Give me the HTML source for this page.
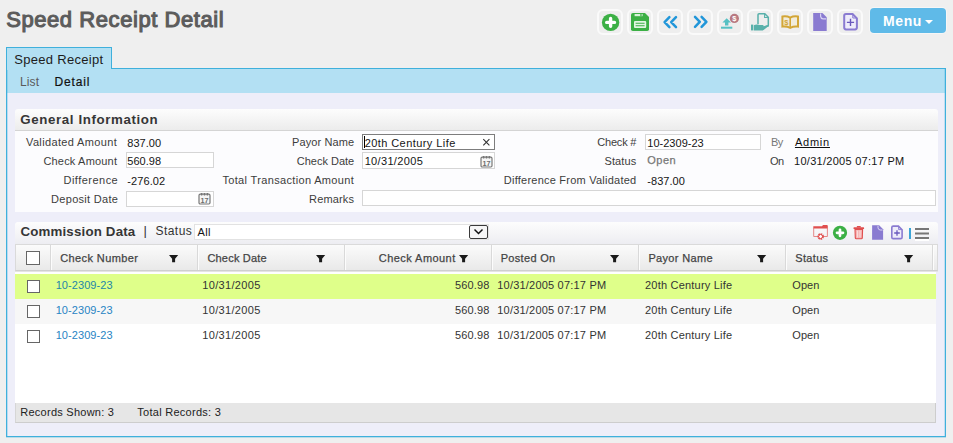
<!DOCTYPE html>
<html><head><meta charset="utf-8">
<style>
*{box-sizing:border-box;margin:0;padding:0}
html,body{width:953px;height:443px;overflow:hidden}
body{background:#efefef;font-family:"Liberation Sans",sans-serif;font-size:11px;color:#222;position:relative}
.abs{position:absolute}
.t{position:absolute;white-space:nowrap;line-height:1}
.tb{position:absolute;top:9px;width:26px;height:26px;border:2px solid #fafafa;border-radius:6px;background:#eeeeee}
.tb svg{position:absolute;left:-2px;top:-2px}
#menu{left:870px;top:8px;width:76px;height:25px;background:#5fbae8;border-radius:4px;box-shadow:0 0 0 1px rgba(255,255,255,.45)}
#menu i{position:absolute;left:55px;top:12px;border-left:4px solid transparent;border-right:4px solid transparent;border-top:4px solid #fff}
#tab{left:6px;top:47px;width:106px;height:22px;background:#b3e0f3;border:1px solid #3fb0dc;border-bottom:none}
#bar{left:6px;top:68px;width:940px;height:26px;background:#b3e0f3;border-top:1px solid #3fb0dc;border-left:1px solid #3fb0dc;border-right:1px solid #3fb0dc;box-shadow:inset 1px 0 0 rgba(63,176,220,.3),inset -1px 0 0 rgba(63,176,220,.25)}
#panel{left:6px;top:93px;width:940px;height:344px;background:#eeeef9;border:1px solid #3fb0dc;border-top:none;box-shadow:inset 1px 0 0 rgba(63,176,220,.3),inset -1px 0 0 rgba(63,176,220,.25),0 1px 0 rgba(63,176,220,.3)}
#tabcover{left:7px;top:68px;width:104px;height:2px;background:#b3e0f3}
.sechd{position:absolute;left:15px;width:923px;border-radius:3px 3px 0 0;background:linear-gradient(#fdfdfd,#ececec)}
#gibody{left:15px;top:131px;width:923px;height:81px;background:#fcfcfe}
.inp{position:absolute;background:#fff;border:1px solid #d6d6d6}
#ghd{left:15px;top:244px;width:923px;height:27px;background:linear-gradient(#fbfbfb,#e9e9e9);border:1px solid #dadada;border-bottom-color:#cfcfcf;box-shadow:0 1px 0 #e4e4e4}
.cs{position:absolute;top:245px;width:1px;height:25px;background:#d9d9d9;box-shadow:1px 0 0 #fcfcfc}
.row{position:absolute;left:15px;width:921px;height:25px}
.cb{position:absolute;width:14px;height:14px;background:#fff;border:1px solid #666;border-radius:0}
#gbody{left:15px;top:271px;width:921px;height:132px;background:#fff}
#gfoot{left:15px;top:403px;width:921px;height:20px;background:#e6e6e6;border-bottom:1px solid #cdcdcd;border-right:1px solid #cdcdcd;border-left:1px solid #d6d6d6}
.ft{position:absolute;top:255px;width:10px;height:8px}
.ic{position:absolute}
</style></head><body>
<div class="tb" style="left:597px"><svg width="26" height="26" viewBox="0 0 26 26"><circle cx="13.6" cy="13.4" r="8.7" fill="#3cb045"/><path d="M9.7 13.4H17.5M13.6 9.5V17.3" stroke="#fff" stroke-width="3.4" stroke-linecap="round"/></svg></div>
<div class="tb" style="left:627px"><svg width="26" height="26" viewBox="0 0 26 26"><path d="M6 4H18L22 8V20.3Q22 22.1 20.2 22.1H5.8Q4 22.1 4 20.3V5.8Q4 4 6 4Z" fill="#3cb045"/><rect x="7.6" y="5" width="8" height="2.2" fill="#d9f2db"/><rect x="13.3" y="5" width="1.3" height="2.2" fill="#3cb045"/><rect x="7" y="11.9" width="12.2" height="7.2" rx="1" fill="#e3f6e4"/><path d="M8.6 14.3H17.6M8.6 16.8H17.6" stroke="#3cb045" stroke-width="1.1"/></svg></div>
<div class="tb" style="left:657px"><svg width="26" height="26" viewBox="0 0 26 26"><path d="M12.4 8.1L7.6 13.1L12.4 18.1M19 8.1L14.2 13.1L19 18.1" fill="none" stroke="#2196d9" stroke-width="2.5" stroke-linejoin="round" stroke-linecap="round"/></svg></div>
<div class="tb" style="left:687px"><svg width="26" height="26" viewBox="0 0 26 26"><path d="M8 7.8L12.8 12.8L8 17.8M14.6 7.8L19.4 12.8L14.6 17.8" fill="none" stroke="#2196d9" stroke-width="2.5" stroke-linejoin="round" stroke-linecap="round"/></svg></div>
<div class="tb" style="left:717px"><svg width="26" height="26" viewBox="0 0 26 26"><path d="M9.7 9.2L14 13.4H11.4V16.4H8V13.4H5.4Z" fill="#55c0c3"/><rect x="4" y="17.7" width="11.3" height="2" fill="#55c0c3"/><circle cx="17.4" cy="9.4" r="4.6" fill="#b87880"/><text x="17.4" y="12.2" font-family="Liberation Sans" font-weight="bold" font-size="7.5" fill="#fff" text-anchor="middle">$</text></svg></div>
<div class="tb" style="left:747px"><svg width="26" height="26" viewBox="0 0 26 26"><path d="M11 15.2V5.8Q11 4.7 12.1 4.7H17.8L21.3 8.2V16.2Q21.3 17.3 20.2 17.3H18.8" fill="none" stroke="#58b0aa" stroke-width="1.5"/><path d="M17.6 4.9V8.5H21.1" fill="none" stroke="#58b0aa" stroke-width="1.1"/><rect x="4" y="15.6" width="2.2" height="5.8" fill="#58b0aa"/><path d="M6.8 16.3Q9.5 14.8 12 15.9H15.6Q16.8 16 16.6 17.2L21 16.1Q22 16.2 21.4 17.2L16.6 20.9Q15.6 21.5 14.4 21.4H6.8Z" fill="#58b0aa"/></svg></div>
<div class="tb" style="left:777px"><svg width="26" height="26" viewBox="0 0 26 26"><path d="M5.4 7.6Q9.6 6.8 13.2 8.6Q16.8 6.8 21 7.6V17.6Q16.8 17 13.2 18.8Q9.6 17 5.4 17.6Z" fill="#f1ecdc" stroke="#d3a637" stroke-width="2"/><path d="M13.2 8.6V18.8" stroke="#d3a637" stroke-width="1.6"/><text x="9.3" y="16" font-family="Liberation Sans" font-weight="bold" font-size="7.5" fill="#d3a637" text-anchor="middle">$</text></svg></div>
<div class="tb" style="left:807px"><svg width="26" height="26" viewBox="0 0 26 26"><path d="M6.2 4H15.4L19.7 8.3V21.9H6.2Z" fill="#8a7bd1"/><path d="M13.6 4.6V7.4Q13.8 9.6 16 9.8H19" fill="none" stroke="#d9d4f3" stroke-width="1.2"/></svg></div>
<div class="tb" style="left:837px"><svg width="26" height="26" viewBox="0 0 26 26"><path d="M9 5H15.6L19.9 9.3V18.6Q19.9 20.4 18.1 20.4H9Q7.2 20.4 7.2 18.6V6.8Q7.2 5 9 5Z" fill="#eeecfa" stroke="#8a7bd1" stroke-width="2"/><path d="M15.8 5.2V9H19.6" fill="none" stroke="#8a7bd1" stroke-width="1"/><path d="M9.9 13.4H17.1M13.5 9.8V17" stroke="#6a59bd" stroke-width="1.4"/></svg></div>
<div id="menu" class="abs"><i></i></div>
<div id="bar" class="abs"></div>
<div id="tab" class="abs"></div>
<div id="tabcover" class="abs"></div>
<div id="panel" class="abs"></div>

<div class="sechd" style="top:109px;height:21px"></div>
<div class="abs" style="left:15px;top:130px;width:923px;height:1px;background:#d4d4d4"></div>
<div id="gibody" class="abs"></div>
<div class="inp" style="left:126px;top:152px;width:88px;height:16px"></div>
<div class="inp" style="left:126px;top:191px;width:88px;height:16px"></div>
<div class="inp" style="left:362px;top:134px;width:133px;height:16px;border-color:#7d7d7d"></div>
<div class="abs" style="left:364px;top:136px;width:1px;height:12px;background:#000"></div>
<div class="inp" style="left:362px;top:152px;width:133px;height:17px"></div>
<div class="inp" style="left:362px;top:190px;width:574px;height:16px"></div>
<div class="inp" style="left:645px;top:134px;width:116px;height:16px"></div>

<div class="sechd" style="top:222px;height:22px;background:linear-gradient(#fdfdfd,#ededf2)"></div>
<div class="inp" style="left:194px;top:224px;width:295px;height:16px;border-color:#e2e2e2"></div>
<div class="abs" style="left:469px;top:225px;width:19px;height:14px;border:1px solid #3a3a3a;border-radius:2px;background:#f6f6f6"><svg width="17" height="12" style="position:absolute;left:0;top:0"><path d="M4.5 3.5 L8.5 7.5 L12.5 3.5" fill="none" stroke="#111" stroke-width="1.5"/></svg></div>

<div id="gbody" class="abs"></div>
<div id="ghd" class="abs"></div>
<div class="cs" style="left:50px"></div><div class="cs" style="left:197px"></div><div class="cs" style="left:344px"></div><div class="cs" style="left:491px"></div><div class="cs" style="left:638px"></div><div class="cs" style="left:785px"></div><div class="cs" style="left:932px"></div>
<div class="cb" style="left:26px;top:251px"></div>
<div class="row" style="top:274px;background:#dfff8a"></div>
<div class="row" style="top:299px;background:#f7f7f7"></div>
<div class="row" style="top:324px;background:#fff"></div>
<div class="cb" style="left:27px;top:280px;width:13px;height:13px"></div>
<div class="cb" style="left:27px;top:305px;width:13px;height:13px"></div>
<div class="cb" style="left:27px;top:330px;width:13px;height:13px"></div>
<svg class="ic" style="left:169px;top:254.8px" width="10" height="8" viewBox="0 0 10 8"><path d="M0 0H9.2L6.1 3.7V7.3H3.1V3.7Z" fill="#1a1a1a"/></svg>
<svg class="ic" style="left:316px;top:254.8px" width="10" height="8" viewBox="0 0 10 8"><path d="M0 0H9.2L6.1 3.7V7.3H3.1V3.7Z" fill="#1a1a1a"/></svg>
<svg class="ic" style="left:458.5px;top:254.8px" width="10" height="8" viewBox="0 0 10 8"><path d="M0 0H9.2L6.1 3.7V7.3H3.1V3.7Z" fill="#1a1a1a"/></svg>
<svg class="ic" style="left:610px;top:254.8px" width="10" height="8" viewBox="0 0 10 8"><path d="M0 0H9.2L6.1 3.7V7.3H3.1V3.7Z" fill="#1a1a1a"/></svg>
<svg class="ic" style="left:757px;top:254.8px" width="10" height="8" viewBox="0 0 10 8"><path d="M0 0H9.2L6.1 3.7V7.3H3.1V3.7Z" fill="#1a1a1a"/></svg>
<svg class="ic" style="left:904px;top:254.8px" width="10" height="8" viewBox="0 0 10 8"><path d="M0 0H9.2L6.1 3.7V7.3H3.1V3.7Z" fill="#1a1a1a"/></svg>
<div id="gfoot" class="abs"></div>
<svg class="ic" style="left:812px;top:224px" width="18" height="17" viewBox="0 0 18 17"><path d="M1.3 2.2H10L11 1H14.9Q15.8 1 15.8 1.9V4.5H1.3Z" fill="#e04f4f"/><path d="M1.7 4V12.5H5.6M11.6 12.5H15.4V4" fill="none" stroke="#e47a7a" stroke-width=".9"/><circle cx="8.6" cy="12.5" r="2.5" fill="#fff" stroke="#e04f4f" stroke-width="1.7" stroke-dasharray="1.6 .7"/><circle cx="8.6" cy="12.5" r="2" fill="none" stroke="#e04f4f" stroke-width="1"/></svg>
<svg class="ic" style="left:832px;top:225px" width="16" height="16" viewBox="0 0 16 16"><circle cx="8" cy="7.8" r="7.1" fill="#3cb045"/><path d="M5 7.8H11M8 4.8V10.8" stroke="#fff" stroke-width="2.7" stroke-linecap="round"/></svg>
<svg class="ic" style="left:852px;top:225px" width="14" height="15" viewBox="0 0 14 15"><rect x="4.8" y="1" width="4" height="1.6" rx=".5" fill="#e04f4f"/><rect x="1.5" y="2.3" width="10.6" height="1.7" rx=".6" fill="#e04f4f"/><path d="M3 4.4H10.6L10.3 12.9Q10.2 13.7 9.4 13.7H4.2Q3.4 13.7 3.3 12.9Z" fill="#f6b4b4" stroke="#e04f4f" stroke-width="1.1"/><path d="M5.6 5.6V12.4M8 5.6V12.4" stroke="#fbe3e3" stroke-width=".9"/></svg>
<svg class="ic" style="left:871px;top:224px" width="14" height="17" viewBox="0 0 14 17"><path d="M1.1 1.3H8.2L12.1 5.2V15.7H1.1Z" fill="#8a7bd1"/><path d="M7 1.8V3.8Q7.2 5.8 9.2 6H11.6" fill="none" stroke="#d9d4f3" stroke-width="1"/></svg>
<svg class="ic" style="left:890px;top:224px" width="14" height="17" viewBox="0 0 14 17"><path d="M3.2 2.1H8.4L12.1 5.8V13.2Q12.1 14.6 10.7 14.6H3.2Q1.8 14.6 1.8 13.2V3.5Q1.8 2.1 3.2 2.1Z" fill="#eeecfa" stroke="#8a7bd1" stroke-width="1.6"/><path d="M8.6 2.3V5.6H11.9" fill="none" stroke="#8a7bd1" stroke-width=".9"/><path d="M4.2 9H9.8M7 6.2V11.8" stroke="#6a59bd" stroke-width="1.3"/></svg>
<div class="abs" style="left:909px;top:228px;width:2px;height:11px;background:#3aa3d6"></div>
<div class="abs" style="left:915px;top:228px;width:14px;height:2px;background:#777;box-shadow:0 4.5px 0 #777,0 9px 0 #777,0 11px 0 #fff"></div>
<svg class="ic" style="left:480px;top:154.5px" width="13" height="13" viewBox="0 0 13 13"><rect x="1" y="2.2" width="11" height="9.8" rx="1.2" fill="#f6f6f6" stroke="#777" stroke-width="1.2"/><path d="M3.6 .9V3.4M6.5 .9V3.4M9.4 .9V3.4" stroke="#777" stroke-width="1.5"/><text x="6.5" y="10.9" font-family="Liberation Sans" font-weight="bold" font-size="7.2" fill="#6c6c6c" text-anchor="middle">17</text></svg>
<svg class="ic" style="left:198px;top:192px" width="13" height="13" viewBox="0 0 13 13"><rect x="1" y="2.2" width="11" height="9.8" rx="1.2" fill="#f6f6f6" stroke="#777" stroke-width="1.2"/><path d="M3.6 .9V3.4M6.5 .9V3.4M9.4 .9V3.4" stroke="#777" stroke-width="1.5"/><text x="6.5" y="10.9" font-family="Liberation Sans" font-weight="bold" font-size="7.2" fill="#6c6c6c" text-anchor="middle">17</text></svg>
<svg class="ic" style="left:482px;top:138px" width="9" height="9" viewBox="0 0 9 9"><path d="M1.3 1.2L7.4 7.3M7.4 1.2L1.3 7.3" stroke="#333" stroke-width="1.1"/></svg>
<span class="t" style="left:6.21px;top:9.00px;font-size:22px;font-weight:normal;color:#5c5c5c;letter-spacing:0.568px;-webkit-text-stroke:1.1px #5c5c5c;">Speed Receipt Detail</span>
<span class="t" style="left:882.89px;top:14.00px;font-size:14px;font-weight:bold;color:#fff;letter-spacing:0.664px;">Menu</span>
<span class="t" style="left:14.31px;top:53.00px;font-size:13px;font-weight:normal;color:#1c1c1c;letter-spacing:0.294px;">Speed Receipt</span>
<span class="t" style="left:19.89px;top:76.00px;font-size:12px;font-weight:normal;color:#5a5a5a;letter-spacing:0.173px;">List</span>
<span class="t" style="left:54.52px;top:76.00px;font-size:12px;font-weight:normal;color:#111;letter-spacing:0.868px;-webkit-text-stroke:0.2px #111;">Detail</span>
<span class="t" style="left:20.21px;top:113.00px;font-size:13.3px;font-weight:bold;color:#363636;letter-spacing:0.620px;">General Information</span>
<span class="t" style="left:26.00px;top:137.00px;font-size:11px;font-weight:normal;color:#3c3c3c;letter-spacing:0.359px;">Validated Amount</span>
<span class="t" style="left:43.42px;top:156.00px;font-size:11px;font-weight:normal;color:#3c3c3c;letter-spacing:0.181px;">Check Amount</span>
<span class="t" style="left:63.52px;top:175.00px;font-size:11px;font-weight:normal;color:#3c3c3c;letter-spacing:0.476px;">Difference</span>
<span class="t" style="left:51.10px;top:194.00px;font-size:11px;font-weight:normal;color:#3c3c3c;letter-spacing:0.291px;">Deposit Date</span>
<span class="t" style="left:127.26px;top:138.00px;font-size:11px;font-weight:normal;color:#151515;letter-spacing:0.029px;">837.00</span>
<span class="t" style="left:127.26px;top:156.00px;font-size:11px;font-weight:normal;color:#151515;letter-spacing:0.029px;">560.98</span>
<span class="t" style="left:127.26px;top:176.00px;font-size:11px;font-weight:normal;color:#151515;letter-spacing:0.109px;">-276.02</span>
<span class="t" style="left:292.05px;top:137.00px;font-size:11px;font-weight:normal;color:#3c3c3c;letter-spacing:0.096px;">Payor Name</span>
<span class="t" style="left:296.84px;top:156.00px;font-size:11px;font-weight:normal;color:#3c3c3c;letter-spacing:-0.018px;">Check Date</span>
<span class="t" style="left:222.42px;top:175.00px;font-size:11px;font-weight:normal;color:#3c3c3c;letter-spacing:0.343px;">Total Transaction Amount</span>
<span class="t" style="left:309.10px;top:194.00px;font-size:11px;font-weight:normal;color:#3c3c3c;letter-spacing:0.155px;">Remarks</span>
<span class="t" style="left:364.63px;top:138.00px;font-size:11px;font-weight:normal;color:#151515;letter-spacing:0.431px;">20th Century Life</span>
<span class="t" style="left:364.63px;top:156.00px;font-size:11px;font-weight:normal;color:#151515;letter-spacing:0.344px;">10/31/2005</span>
<span class="t" style="left:597.21px;top:137.00px;font-size:11px;font-weight:normal;color:#3c3c3c;letter-spacing:-0.187px;">Check #</span>
<span class="t" style="left:604.47px;top:156.00px;font-size:11px;font-weight:normal;color:#3c3c3c;letter-spacing:0.113px;">Status</span>
<span class="t" style="left:503.84px;top:175.00px;font-size:11px;font-weight:normal;color:#3c3c3c;letter-spacing:0.231px;">Difference From Validated</span>
<span class="t" style="left:647.26px;top:138.00px;font-size:11px;font-weight:normal;color:#151515;letter-spacing:0.022px;">10-2309-23</span>
<span class="t" style="left:647.26px;top:155.00px;font-size:11px;font-weight:normal;color:#777;letter-spacing:0.500px;-webkit-text-stroke:0.25px #777;">Open</span>
<span class="t" style="left:647.26px;top:176.00px;font-size:11px;font-weight:normal;color:#151515;letter-spacing:0.053px;">-837.00</span>
<span class="t" style="left:771.10px;top:137.00px;font-size:11px;font-weight:normal;color:#777;letter-spacing:-0.572px;">By</span>
<span class="t" style="left:770.00px;top:156.00px;font-size:11px;font-weight:normal;color:#3c3c3c;letter-spacing:-0.494px;">On</span>
<span class="t" style="left:794.95px;top:137.00px;font-size:11px;font-weight:normal;color:#111;letter-spacing:0.770px;text-decoration:underline;">Admin</span>
<span class="t" style="left:794.05px;top:156.00px;font-size:11px;font-weight:normal;color:#151515;letter-spacing:0.278px;">10/31/2005 07:17 PM</span>
<span class="t" style="left:20.42px;top:225.00px;font-size:13.3px;font-weight:bold;color:#363636;letter-spacing:0.179px;">Commission Data</span>
<span class="t" style="left:143.52px;top:224.00px;font-size:13px;font-weight:normal;color:#333;letter-spacing:0.000px;">|</span>
<span class="t" style="left:155.47px;top:225.00px;font-size:12px;font-weight:normal;color:#333;letter-spacing:0.464px;">Status</span>
<span class="t" style="left:197.42px;top:227.00px;font-size:11px;font-weight:normal;color:#151515;letter-spacing:0.399px;">All</span>
<span class="t" style="left:60.21px;top:253.00px;font-size:11px;font-weight:normal;color:#444;letter-spacing:0.397px;-webkit-text-stroke:0.25px #444;">Check Number</span>
<span class="t" style="left:207.42px;top:253.00px;font-size:11px;font-weight:normal;color:#444;letter-spacing:0.202px;-webkit-text-stroke:0.25px #444;">Check Date</span>
<span class="t" style="left:378.79px;top:253.00px;font-size:11px;font-weight:normal;color:#444;letter-spacing:0.447px;-webkit-text-stroke:0.25px #444;">Check Amount</span>
<span class="t" style="left:500.68px;top:253.00px;font-size:11px;font-weight:normal;color:#444;letter-spacing:0.324px;-webkit-text-stroke:0.25px #444;">Posted On</span>
<span class="t" style="left:648.42px;top:253.00px;font-size:11px;font-weight:normal;color:#444;letter-spacing:0.336px;-webkit-text-stroke:0.25px #444;">Payor Name</span>
<span class="t" style="left:795.37px;top:253.00px;font-size:11px;font-weight:normal;color:#444;letter-spacing:0.305px;-webkit-text-stroke:0.25px #444;">Status</span>
<span class="t" style="left:55.63px;top:280.00px;font-size:11px;font-weight:normal;color:#1d86a8;letter-spacing:0.082px;">10-2309-23</span>
<span class="t" style="left:202.31px;top:280.00px;font-size:11px;font-weight:normal;color:#333;letter-spacing:0.324px;">10/31/2005</span>
<span class="t" style="left:455.00px;top:280.00px;font-size:11px;font-weight:normal;color:#333;letter-spacing:0.131px;">560.98</span>
<span class="t" style="left:497.26px;top:280.00px;font-size:11px;font-weight:normal;color:#333;letter-spacing:0.204px;">10/31/2005 07:17 PM</span>
<span class="t" style="left:645.00px;top:280.00px;font-size:11px;font-weight:normal;color:#333;letter-spacing:0.209px;">20th Century Life</span>
<span class="t" style="left:792.37px;top:280.00px;font-size:11px;font-weight:normal;color:#333;letter-spacing:0.040px;">Open</span>
<span class="t" style="left:55.63px;top:305.00px;font-size:11px;font-weight:normal;color:#2784c4;letter-spacing:0.082px;">10-2309-23</span>
<span class="t" style="left:202.31px;top:305.00px;font-size:11px;font-weight:normal;color:#333;letter-spacing:0.324px;">10/31/2005</span>
<span class="t" style="left:455.00px;top:305.00px;font-size:11px;font-weight:normal;color:#333;letter-spacing:0.131px;">560.98</span>
<span class="t" style="left:497.26px;top:305.00px;font-size:11px;font-weight:normal;color:#333;letter-spacing:0.204px;">10/31/2005 07:17 PM</span>
<span class="t" style="left:645.00px;top:305.00px;font-size:11px;font-weight:normal;color:#333;letter-spacing:0.209px;">20th Century Life</span>
<span class="t" style="left:792.37px;top:305.00px;font-size:11px;font-weight:normal;color:#333;letter-spacing:0.040px;">Open</span>
<span class="t" style="left:55.63px;top:330.00px;font-size:11px;font-weight:normal;color:#2784c4;letter-spacing:0.082px;">10-2309-23</span>
<span class="t" style="left:202.31px;top:330.00px;font-size:11px;font-weight:normal;color:#333;letter-spacing:0.324px;">10/31/2005</span>
<span class="t" style="left:455.00px;top:330.00px;font-size:11px;font-weight:normal;color:#333;letter-spacing:0.131px;">560.98</span>
<span class="t" style="left:497.26px;top:330.00px;font-size:11px;font-weight:normal;color:#333;letter-spacing:0.204px;">10/31/2005 07:17 PM</span>
<span class="t" style="left:645.00px;top:330.00px;font-size:11px;font-weight:normal;color:#333;letter-spacing:0.209px;">20th Century Life</span>
<span class="t" style="left:792.37px;top:330.00px;font-size:11px;font-weight:normal;color:#333;letter-spacing:0.040px;">Open</span>
<span class="t" style="left:20.31px;top:407.00px;font-size:11px;font-weight:normal;color:#222;letter-spacing:0.250px;">Records Shown: 3</span>
<span class="t" style="left:137.26px;top:407.00px;font-size:11px;font-weight:normal;color:#222;letter-spacing:0.277px;">Total Records: 3</span>
</body></html>
